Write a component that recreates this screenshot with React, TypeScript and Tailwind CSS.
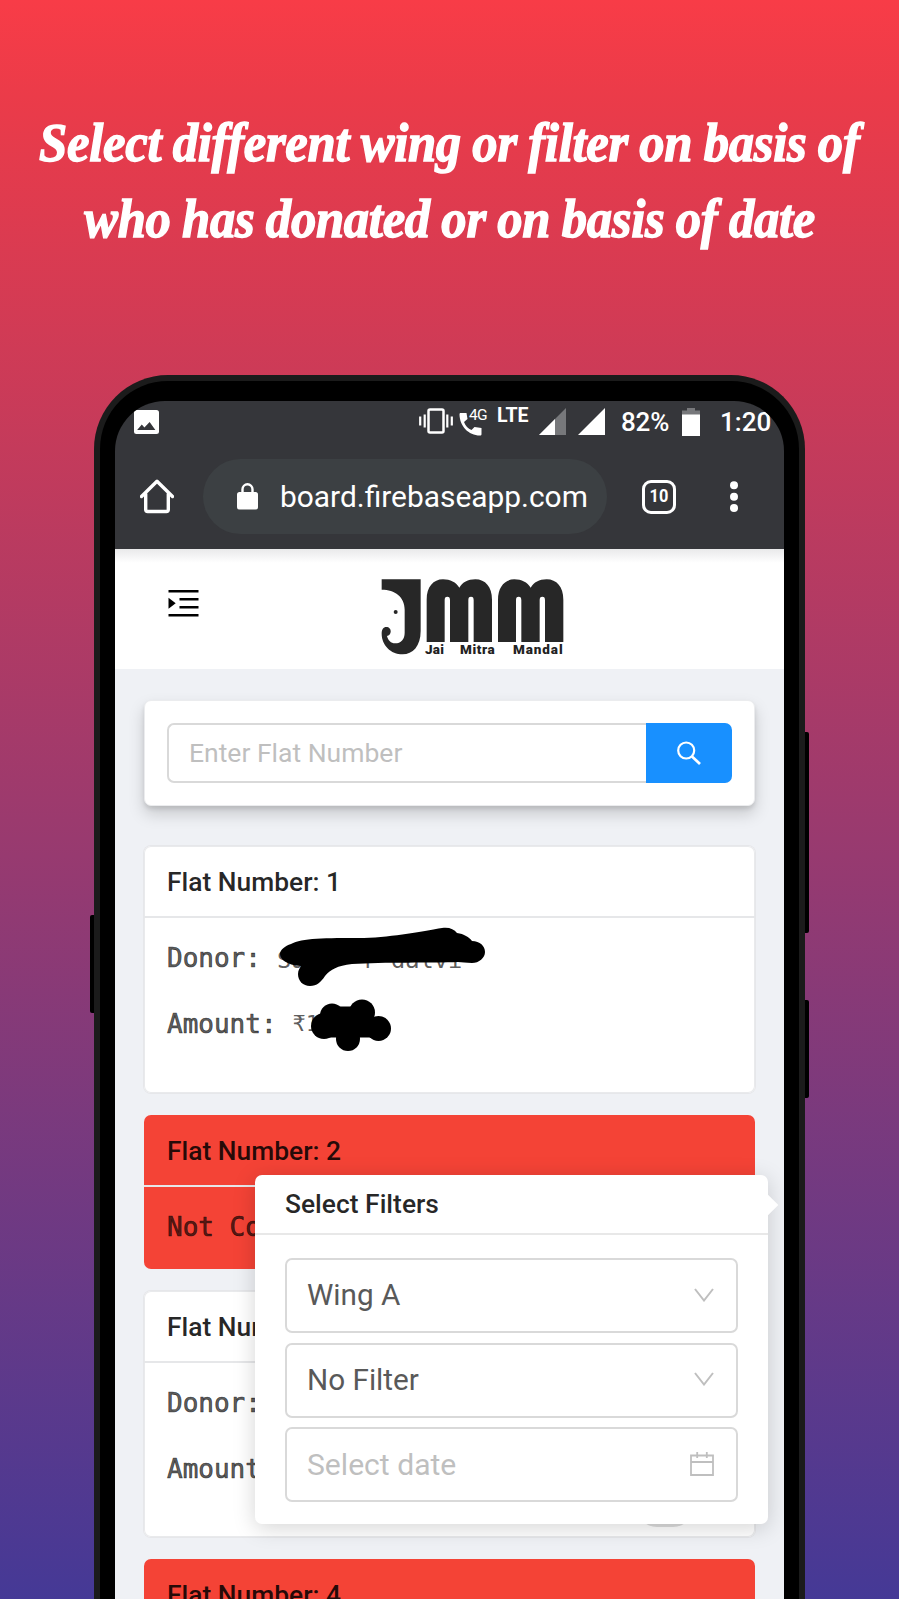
import type { ReactNode } from "react";

function Headline() {
  return (
    <h1 className="flex h-[375px] shrink-0 flex-col items-center pt-[105px] font-['Liberation_Serif',serif] text-[54px] leading-[76px] font-bold text-white italic [-webkit-text-stroke:1.4px_white]">
      <span className="block scale-x-[0.938] [word-spacing:-1px] tracking-[-0.3px] whitespace-nowrap">
        Select different wing or filter on basis of
      </span>
      <span className="block scale-x-[0.938] [word-spacing:-1px] tracking-[-0.3px] whitespace-nowrap">
        who has donated or on basis of date
      </span>
    </h1>
  );
}

function StatusBar() {
  return (
    <div className="flex h-[42px] items-start pt-[7px] pl-[19px] text-white">
      <svg className="mt-[2px] h-6 w-[25px]" viewBox="0 0 24 24" preserveAspectRatio="none">
        <rect width="24" height="24" rx="2.500" fill="#fff" />
        <path d="M3 20 7.500 14.500l2.500 3 5-5.500 5.500 8z" fill="#35363a" />
      </svg>
      <svg className="ml-[260px] h-[26px] w-[34px]" viewBox="0 0 34 26" fill="none" stroke="#fff">
        <rect x="9.500" y="1.500" width="15" height="23" rx="1.500" strokeWidth="2.500" />
        <path d="M1.200 8.500v9M5.700 6.500v13M28.300 6.500v13M32.800 8.500v9" strokeWidth="2.200" />
      </svg>
      <div className="relative ml-[6px] h-7 w-7">
        <svg className="mt-[4px] h-6 w-6" viewBox="0 0 24 24">
          <path
            d="M1 1h6.500l1 6-3.500 3c1.500 4 4 6.500 7.500 8l3-3 7 1v6c0 1-.5 1.500-1.500 1.500C9.500 23.500.5 14 .5 2z"
            fill="#fff"
          />
        </svg>
        <span className="absolute top-[-1px] left-[10px] text-[15.500px] leading-[17px] tracking-[-0.8px]">4G</span>
      </div>
      <span className="ml-[10px] w-[34px] text-[19.500px] leading-[15px] font-bold">LTE</span>
      <svg className="ml-[8px] h-[27px] w-[27px]" viewBox="0 0 27 27">
        <path d="M27 0v27H0z" fill="#77787b" />
        <path d="M16 11v16H0z" fill="#fff" />
      </svg>
      <svg className="ml-[12px] h-[27px] w-[27px]" viewBox="0 0 27 27">
        <path d="M27 0v27H0z" fill="#fff" />
      </svg>
      <span className="ml-[16px] w-[49px] text-[26px] leading-[29px] font-medium tracking-[-0.2px] whitespace-nowrap">
        82%
      </span>
      <svg className="ml-[12px] h-7 w-[18px]" viewBox="0 0 18 28">
        <path d="M5 0h8v2.500h5V8H0V2.500h5z" fill="#77787b" />
        <path d="M0 6.500h18V28H0z" fill="#fff" />
      </svg>
      <span className="ml-[20px] text-[26px] leading-[29px] font-medium whitespace-nowrap">1:20</span>
    </div>
  );
}

function BrowserBar() {
  return (
    <div className="flex h-[106px] items-center pt-[1px] pl-[25px] text-white">
      <svg className="h-[35px] w-[34px]" viewBox="0 0 34 35" fill="none" stroke="#fff" strokeWidth="3.400">
        <path
          d="M1.500 17.500 17 2.200l15.500 15.300M5.700 15v15.500a2 2 0 0 0 2 2h18.600a2 2 0 0 0 2-2V15"
          strokeLinejoin="round"
          strokeLinecap="round"
        />
      </svg>
      <div className="ml-[29px] flex h-[75px] w-[404px] items-center rounded-full bg-[#3c4043] pl-[34px]">
        <svg className="h-[27px] w-[21px]" viewBox="0 0 21 27">
          <path d="M5.500 10V6.300a5 5 0 0 1 10 0V10" fill="none" stroke="#fff" strokeWidth="2.400" />
          <rect y="9" width="21" height="17.500" rx="2.500" fill="#fff" />
        </svg>
        <span className="ml-[22px] pt-[2px] text-[29.900px] whitespace-nowrap">board.firebaseapp.com</span>
      </div>
      <div className="ml-[35px] flex h-[34px] w-[34px] items-center justify-center rounded-[9px] border-[3.500px] border-white text-[19px] font-bold">
        <span className="scale-x-[0.86]">10</span>
      </div>
      <svg className="ml-[54px] h-[32px] w-2" viewBox="0 0 8 32" fill="#fff">
        <circle cx="4" cy="4.300" r="4" />
        <circle cx="4" cy="15.700" r="4" />
        <circle cx="4" cy="27" r="4" />
      </svg>
    </div>
  );
}

const ARCHED_M =
  "M200 245V118c0-38 20-61 49-61 22 0 39 9 49 25 10-16 25-25 48-25 30 0 50 23 50 61v127h-55V120c0-8-2-11-8-11s-8 3-8 11v125h-55V120c0-8-2-11-8-11s-8 3-8 11v125z";

function Logo() {
  return (
    <div className="relative ml-[181px] h-[80px] w-[187px]">
      <svg className="h-[80px] w-[187px]" viewBox="60 50 561 240" fill="#272727">
        <path d="M65 57h117v155c0 46-24 70-54 70-36 0-63-28-63-62 0-13 5-20 14-20 8 0 14 6 13 15-1 7-5 11-11 12 3 13 12 22 24 22 18 0 29-12 29-32v-69c0-38-29-60-69-60z" />
        <circle cx="107" cy="155" r="6" />
        <path d={ARCHED_M} />
        <path d={ARCHED_M} transform="translate(214 0)" />
      </svg>
      <div className="absolute top-[65px] left-[45px] flex text-[13.500px] leading-[14px] font-black text-[#222]">
        <span className="w-[35px] tracking-[0.2px]">Jai</span>
        <span className="w-[53px] tracking-[0.6px]">Mitra</span>
        <span className="tracking-[0.9px]">Mandal</span>
      </div>
    </div>
  );
}

function SiteHeader() {
  return (
    <header className="flex h-[120px] items-start bg-white bg-[linear-gradient(#e9e9ea,#ffffff_14px)] pt-[28px] pl-[53px]">
      <svg className="mt-[12px] h-7 w-[31px]" viewBox="0 0 31 28">
        <path d="M0.500 2.300h30M11.500 10.300h19M11.500 18.300h19M0.500 26.300h30" stroke="#000" strokeWidth="2.500" />
        <path d="M0.500 8.800v11l7.200-5.500z" fill="#000" />
      </svg>
      <Logo />
    </header>
  );
}

function SearchCard() {
  return (
    <div className="flex h-[106px] items-center rounded-[7px] border border-[#ebecee] bg-white px-[22px] shadow-[0_8px_16px_rgba(0,0,0,0.17),0_3px_4px_rgba(0,0,0,0.1)]">
      <div className="flex h-[60px] flex-1 items-center rounded-l-[7px] border-2 border-r-0 border-[#d9d9d9] pl-[20px] text-[26.500px] text-[#bfbfbf]">
        Enter Flat Number
      </div>
      <div className="flex h-[60px] w-[86px] items-center justify-center rounded-r-[7px] bg-[#1890ff]">
        <svg className="h-[24px] w-[24px]" viewBox="0 0 24 24" fill="none" stroke="#fff" strokeWidth="2.200">
          <circle cx="9.200" cy="9.500" r="8" />
          <path d="m15 15.500 8 7.500" strokeWidth="2.700" />
        </svg>
      </div>
    </div>
  );
}

function Card({ number, className, children }: { number: number; className: string; children?: ReactNode }) {
  return (
    <section className={"overflow-hidden rounded-[7px] " + className}>
      <h2 className="flex h-[72px] items-center border-b-2 border-[#e6e7e9] pt-[3px] pl-[23px] text-[26.400px] font-medium text-black/85">
        Flat Number: {number}
      </h2>
      <div className="pt-[7px] pl-[23px] font-['DejaVu_Sans_Mono',monospace] text-[26px] leading-[66px] text-black/65">
        {children}
      </div>
    </section>
  );
}

const PLAIN = "bg-white shadow-[inset_0_0_0_1px_#e9eaec,0_0_0_1px_#e6e7ea]";
const ALERT = "bg-[#f44336]";
const LABEL = "[-webkit-text-stroke:0.7px_currentColor]";

function DonorRows({ donor, amount }: { donor?: string; amount?: string }) {
  return (
    <>
      <p className="flex h-[66px] items-center whitespace-pre">
        <span className={LABEL}>Donor:</span>
        <span className="ml-[16px] pt-[3px] text-[23.700px]">{donor}</span>
      </p>
      <p className="flex h-[65px] items-center whitespace-pre">
        <span className={LABEL}>Amount:</span>
        <span className="ml-[16px] text-[22px]">{amount}</span>
      </p>
    </>
  );
}

function Scribbles() {
  return (
    <svg className="absolute top-[77px] left-[130px] h-[130px] w-[214px]" viewBox="0 0 214 130">
      <path
        d="M17 21C28 15 50 15 90 15c30-1 60-7 78-10 7-1 12 1 15 5 7 1 12 4 15 8 8 0 13 5 13 11s-6 11-13 11c-6 0-10-1-14-1-25 1-75 0-106 2-15 2-21 5-27 12-4 6-8 10-15 10-7 0-12-5-12-12 0-4 2-6 3-8C12 42 6 36 6 31c0-4 5-8 11-10z"
        fill="#000"
      />
      <g fill="#000">
        <circle cx="50" cy="103" r="13" />
        <circle cx="58" cy="92.500" r="12" />
        <circle cx="88" cy="89.500" r="13" />
        <circle cx="74" cy="116" r="12" />
        <circle cx="104.500" cy="105.500" r="12.500" />
        <path d="M60 83.500h37l8 31H55z" />
      </g>
    </svg>
  );
}

function ChevronDown() {
  return (
    <svg className="mr-[2px] mb-[2px] h-[14px] w-[20px]" viewBox="0 0 20 14" fill="none" stroke="#bfbfbf" strokeWidth="2">
      <path d="M1 1l9 11.500L19 1" />
    </svg>
  );
}

function CalendarIcon() {
  return (
    <svg className="mr-[2px] mb-[1px] h-[24px] w-[24px]" viewBox="0 0 24 24" fill="none" stroke="#bfbfbf" strokeWidth="1.800">
      <path d="M1 3.500h22v19.500H1zM1 10h22M7.200 0v6M16.800 0v6" />
    </svg>
  );
}

function Field({ text, placeholder, icon }: { text: string; placeholder?: boolean; icon: ReactNode }) {
  return (
    <div className="flex h-[75px] items-center justify-between rounded-[7px] border-2 border-[#d9d9d9] pr-[20px] pl-[20px]">
      <span className={placeholder ? "text-[30.100px] text-[#bfbfbf]" : "text-[29.700px] text-[#595959]"}>{text}</span>
      {icon}
    </div>
  );
}

function FilterPopover() {
  return (
    <div className="absolute top-[506px] left-[140px] h-[349px] w-[513px] rounded-[7px] bg-white shadow-[0_4px_22px_rgba(0,0,0,0.17)]">
      <div className="absolute top-[22px] right-[-7px] h-4 w-4 rotate-45 bg-white" />
      <h3 className="relative flex h-[60px] items-center border-b-2 border-[#e8e8e8] pt-[1px] pl-[30px] text-[26.400px] font-medium text-black/85">
        Select Filters
      </h3>
      <div className="flex flex-col gap-[9.500px] px-[30px] pt-[23px]">
        <Field text="Wing A" icon={<ChevronDown />} />
        <Field text="No Filter" icon={<ChevronDown />} />
        <Field text="Select date" placeholder icon={<CalendarIcon />} />
      </div>
    </div>
  );
}

export default function App() {
  return (
    <div className="flex h-[1599px] w-[899px] flex-col overflow-hidden bg-[linear-gradient(#f83c47,#eb3b49_6%,#453996)] font-[Roboto,sans-serif]">
      <Headline />
      <div className="relative ml-[94px] flex w-[711px] flex-1 flex-col">
        <div className="absolute top-[540px] left-[-4px] h-[98px] w-3 rounded-[2px] bg-black" />
        <div className="absolute top-[357px] right-[-4px] h-[201px] w-3 rounded-[2px] bg-black" />
        <div className="absolute top-[625px] right-[-4px] h-[98px] w-3 rounded-[2px] bg-black" />
        <div className="relative flex min-h-0 flex-1 flex-col rounded-t-[74px] border-x-[6px] border-t-[6px] border-[#1b1b1b] bg-black px-[15px] pt-[20px]">
          <div className="h-[1198px] overflow-hidden rounded-t-[50px] bg-[#35363a]">
            <StatusBar />
            <BrowserBar />
            <SiteHeader />
            <main className="relative h-[930px] bg-[#eff1f5] px-[29px] pt-[31px]">
              <SearchCard />
              <div className="mt-[40px] flex flex-col gap-[22px]">
                <div className="relative">
                  <Card number={1} className={"h-[247px] " + PLAIN}>
                    <DonorRows donor="Sa    r dalvi" amount="₹1" />
                  </Card>
                  <Scribbles />
                </div>
                <Card number={2} className={"h-[154px] " + ALERT}>
                  <p className={LABEL}>Not Collected</p>
                </Card>
                <Card number={3} className={"h-[246px] " + PLAIN}>
                  <DonorRows />
                </Card>
                <Card number={4} className={"h-[154px] " + ALERT} />
              </div>
              <div className="absolute top-[814px] left-[520px] h-[44px] w-[60px] rounded-full bg-[#dcdcdc]" />
              <FilterPopover />
            </main>
          </div>
        </div>
      </div>
    </div>
  );
}
